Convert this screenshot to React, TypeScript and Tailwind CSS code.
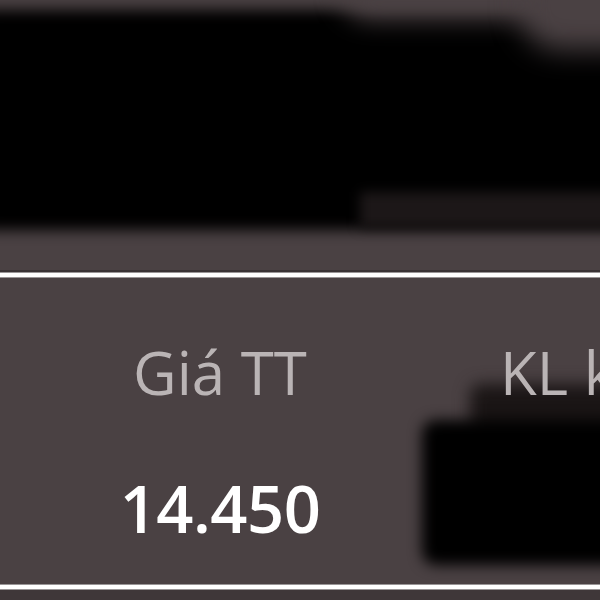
import React from "react";

export default function App() {
  return (
    <div
      className="w-[600px] h-[600px] overflow-hidden bg-[#4a4143] flex flex-col"
      style={{ fontFamily: '"Open Sans", "Noto Sans", sans-serif' }}
    >
      {/* top redacted area */}
      <div className="relative h-[270px] shrink-0 overflow-hidden">
        <div className="absolute left-[-40px] top-[10px] w-[700px] h-[220px] bg-black rounded-[30px] blur-[7px]" />
        <div className="absolute left-[360px] top-[192px] w-[300px] h-[36px] bg-[#1c1718] blur-[6px]" />
        <div className="absolute left-[340px] top-[-40px] w-[320px] h-[60px] bg-[#4a4143] rounded-[40px] blur-[12px]" />
        <div className="absolute left-[520px] top-[-40px] w-[140px] h-[90px] bg-[#4a4143] rounded-[40px] blur-[14px]" />
      </div>
      <div className="h-[2px] shrink-0 bg-[#3a3335]" />
      <div className="h-[6px] shrink-0 bg-white border-y border-[#9a9697]" />
      {/* stats row */}
      <div className="h-[306px] shrink-0 flex">
        <div className="w-[440px] shrink-0 flex flex-col items-center pt-[54px]">
          <div className="text-[60px] leading-[80px] text-[#bab4b5]">Giá TT</div>
          <div className="mt-[56px] text-[65px] leading-[80px] font-semibold text-white tracking-[-0.5px]">14.450</div>
        </div>
        <div className="relative flex-1 flex flex-col pt-[54px] pl-[60px]">
          <div className="absolute left-[30px] top-[106px] w-[200px] h-[50px] bg-[#1a1515] rounded-[10px] blur-[8px]" />
          <div className="absolute left-[-18px] top-[142px] w-[220px] h-[145px] bg-black rounded-[14px] blur-[7px]" />
          <div className="relative text-[60px] leading-[80px] text-[#bab4b5] whitespace-nowrap">KL khớp</div>
        </div>
      </div>
      <div className="h-[6px] shrink-0 bg-white border-y border-[#9a9697]" />
      <div className="flex-1 bg-[#3f3739]" />
    </div>
  );
}
